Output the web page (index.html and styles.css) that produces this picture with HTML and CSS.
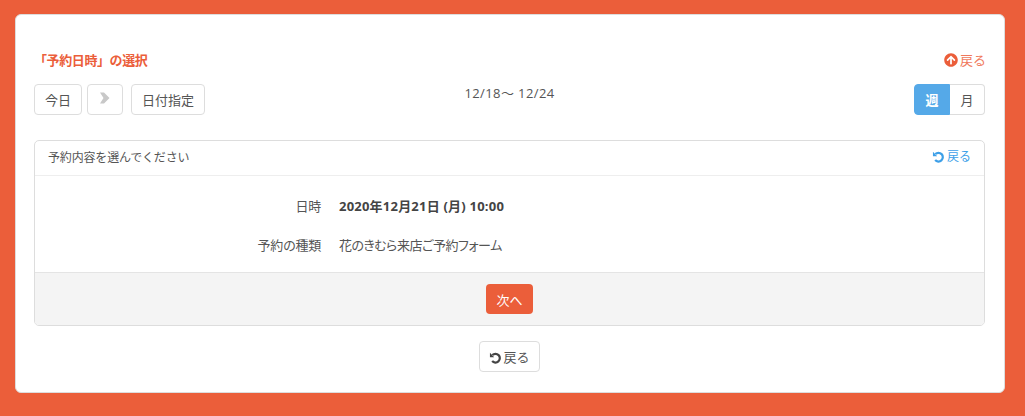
FILE: index.html
```html
<!DOCTYPE html>
<html lang="ja">

<head>
  <meta charset="UTF-8">
  <meta name="viewport" content="width=device-width, initial-scale=1.0">
  <title>予約日時の選択</title>
  <link rel="stylesheet" href="styles.css">
</head>

<body>
  <main class="sheet">
    <div class="title-row">
      <h1>「予約日時」の選択</h1>
      <a class="link-up" href="#">
        <svg class="icon icon-up" viewBox="0 0 512 512"><path fill="#eb5e3a" d="M8 256C8 119 119 8 256 8s248 111 248 248-111 248-248 248S8 393 8 256zm143.6 28.9l72.4-75.5V392c0 13.3 10.7 24 24 24h16c13.3 0 24-10.7 24-24V209.4l72.4 75.5c9.3 9.7 24.8 9.9 34.3.4l10.9-11c9.4-9.4 9.4-24.6 0-33.9L273 107.7c-9.4-9.4-24.6-9.4-33.9 0L106.3 240.4c-9.4 9.4-9.4 24.6 0 33.9l10.9 11c9.6 9.5 25.1 9.3 34.4-.4z"/></svg>戻る
      </a>
    </div>

    <div class="toolbar">
      <div class="tools-left">
        <button class="btn">今日</button>
        <button class="btn btn-arrow" disabled>
          <svg viewBox="0 0 12 14" width="12" height="14"><path d="M1 1.5 L5 1.5 L10.5 7 L5 12.5 L1 12.5 L4.5 7 Z" fill="#c8c8c8"/></svg>
        </button>
        <button class="btn btn-date">日付指定</button>
      </div>
      <div class="range">12/18～ 12/24</div>
      <div class="switch">
        <button class="switch-item active">週</button>
        <button class="switch-item">月</button>
      </div>
    </div>

    <section class="panel">
      <div class="panel-head">
        <span class="panel-title">予約内容を選んでください</span>
        <a class="link-back" href="#">
          <svg class="icon" viewBox="0 0 14 14"><path d="M3.6 4.4 A4.7 4.7 0 1 1 3.4 10.8" fill="none" stroke="#3d9fe8" stroke-width="2.4"/><path d="M1 2 V6.6 H5.6 Z" fill="#3d9fe8"/></svg>戻る
        </a>
      </div>
      <dl class="detail">
        <div class="detail-row">
          <dt>日時</dt>
          <dd class="strong">2020年12月21日 (月) 10:00</dd>
        </div>
        <div class="detail-row">
          <dt>予約の種類</dt>
          <dd class="form-name">花のきむら来店ご予約フォーム</dd>
        </div>
      </dl>
      <div class="panel-foot">
        <button class="btn-next">次へ</button>
      </div>
    </section>

    <div class="back-row">
      <button class="btn btn-back">
        <svg class="icon" viewBox="0 0 14 14"><path d="M3.6 4.4 A4.7 4.7 0 1 1 3.4 10.8" fill="none" stroke="#444" stroke-width="2.4"/><path d="M1 2 V6.6 H5.6 Z" fill="#444"/></svg>戻る
      </button>
    </div>
  </main>
</body>

</html>
```

FILE: styles.css
```css
* {
  box-sizing: border-box;
}

body {
  margin: 0;
  height: 416px;
  padding: 14px 20px 23px 15px;
  background: #eb5e3a;
  font-family: 'Open Sans', 'Noto Sans CJK JP', sans-serif;
  font-size: 13px;
  color: #555;
  overflow: hidden;
}

a {
  text-decoration: none;
}

button {
  font-family: inherit;
  cursor: pointer;
}

.sheet {
  height: 379px;
  padding: 35px 19px 0 18px;
  background: #fff;
  border: 1px solid #ddd;
  border-radius: 6px;
}

.title-row {
  display: flex;
  justify-content: space-between;
  align-items: center;
  height: 18px;
}

h1 {
  margin: 0;
  font-size: 13px;
  font-weight: bold;
  letter-spacing: -0.4px;
  color: #eb5e3a;
}

.icon {
  width: 13px;
  height: 13px;
  margin-right: 2px;
  vertical-align: -2px;
}

.icon-up {
  width: 14px;
  height: 14px;
}

.link-up {
  margin-right: -1px;
  color: #f0795c;
}

.link-back {
  color: #3d9fe8;
}

.toolbar {
  display: flex;
  justify-content: space-between;
  margin-top: 16px;
  height: 31px;
  position: relative;
}

.tools-left {
  display: flex;
  gap: 5px;
}

.btn {
  height: 31px;
  padding: 0 10px;
  background: #fff;
  border: 1px solid #ddd;
  border-radius: 4px;
  font-size: 13px;
  color: #555;
}

.btn-arrow {
  width: 36px;
  padding: 0;
  cursor: default;
}

.btn-date {
  margin-left: 3px;
}

.range {
  position: absolute;
  left: 0;
  right: 0;
  top: 0;
  line-height: 18px;
  text-align: center;
  letter-spacing: 0.4px;
  color: #555;
}

.switch {
  display: flex;
  position: relative;
}

.switch-item {
  width: 36px;
  height: 31px;
  padding: 0;
  background: #fff;
  border: 1px solid #ddd;
  font-size: 13px;
  color: #555;
}

.switch-item:first-child {
  border-radius: 4px 0 0 4px;
}

.switch-item:last-child {
  width: 35px;
  border-left: 0;
  border-radius: 0 4px 4px 0;
}

.switch-item.active {
  background: #55a9e8;
  border-color: #55a9e8;
  color: #fff;
  font-weight: bold;
}

.panel {
  margin-top: 25px;
  border: 1px solid #ddd;
  border-radius: 5px;
  overflow: hidden;
}

.panel-head {
  display: flex;
  justify-content: space-between;
  height: 35px;
  padding: 5px 13px 0;
  border-bottom: 1px solid #eee;
  font-size: 12px;
}

.panel-title {
  margin-top: 2px;
  letter-spacing: -0.17px;
}

.panel-head .link-back {
  margin-top: 1px;
}

.detail {
  margin: 0;
  padding: 10px 0 8px;
}

.detail-row {
  display: flex;
  align-items: center;
  height: 39px;
}

dt {
  width: 286px;
  text-align: right;
  letter-spacing: -0.3px;
}

dd {
  margin: 0 0 0 18px;
}

.strong {
  font-weight: bold;
  letter-spacing: 0.22px;
  color: #444;
}

.form-name {
  font-feature-settings: 'palt';
  letter-spacing: -0.45px;
}

.panel-foot {
  display: flex;
  justify-content: center;
  align-items: center;
  height: 53px;
  background: #f4f4f4;
  border-top: 1px solid #e4e4e4;
}

.btn-next {
  height: 30px;
  width: 47px;
  padding: 0;
  background: #eb5e3a;
  border: 0;
  border-radius: 4px;
  font-size: 13px;
  color: #fff;
}

.back-row {
  display: flex;
  justify-content: center;
  margin-top: 15px;
}

.btn-back {
  width: 61px;
  padding: 0;
}

.btn-back .icon {
  margin-right: 1px;
}
```
